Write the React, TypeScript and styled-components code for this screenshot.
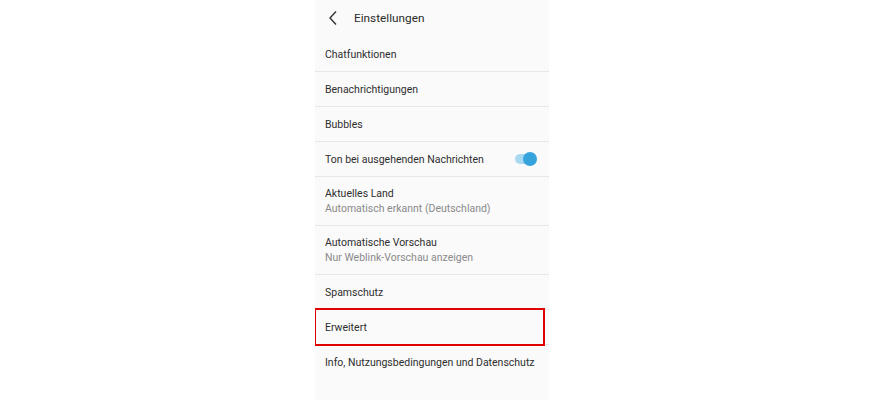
import styled, { createGlobalStyle } from "styled-components";

const GlobalStyle = createGlobalStyle`
  body {
    margin: 0;
    background: #ffffff;
    font-family: Roboto, "Noto Sans", sans-serif;
  }
`;

const Page = styled.div`
  display: flex;
  padding-left: 315px;
  height: 400px;
`;

const Panel = styled.div`
  width: 234px;
  height: 400px;
  background: #fafafa;
  display: flex;
  flex-direction: column;
  overflow: hidden;
`;

const Header = styled.div`
  display: flex;
  align-items: center;
  height: 36px;
  padding: 0 0 1px 13px;
  color: #2b2b2b;
`;

const BackButton = styled.svg`
  width: 10px;
  height: 16px;
  margin-right: 16px;
`;

const Title = styled.div`
  font-size: 11.8px;
`;

const Row = styled.div<{ $double?: boolean; $highlight?: boolean }>`
  position: relative;
  display: flex;
  align-items: center;
  justify-content: space-between;
  height: ${(p) => (p.$double ? 48 : 34)}px;
  padding: 0 12px 0 10px;
  border-bottom: 1px solid #e7e7e7;
  flex-shrink: 0;

  &:last-child {
    border-bottom: none;
  }

  ${(p) =>
    p.$highlight &&
    `
    &::after {
      content: "";
      position: absolute;
      top: -2px;
      left: -1px;
      right: 4px;
      bottom: -2px;
      border: 2.5px solid #e10000;
    }
  `}
`;

const Texts = styled.div`
  display: flex;
  flex-direction: column;
  gap: 2px;
  white-space: nowrap;
`;

const Label = styled.div`
  font-size: 10.5px;
  color: #2e2e2e;
`;

const Sub = styled.div`
  font-size: 10.5px;
  color: #8a8a8a;
`;

const Toggle = styled.div`
  position: relative;
  width: 22px;
  height: 14px;
  display: flex;
  align-items: center;
`;

const Track = styled.div`
  width: 20px;
  height: 10px;
  border-radius: 5px;
  background: #a9d9f1;
`;

const Knob = styled.div`
  position: absolute;
  right: 0;
  top: 0;
  width: 14px;
  height: 14px;
  border-radius: 50%;
  background: #36a3dd;
`;

const items: { label: string; sub?: string; toggle?: boolean; highlight?: boolean }[] = [
  { label: "Chatfunktionen" },
  { label: "Benachrichtigungen" },
  { label: "Bubbles" },
  { label: "Ton bei ausgehenden Nachrichten", toggle: true },
  { label: "Aktuelles Land", sub: "Automatisch erkannt (Deutschland)" },
  { label: "Automatische Vorschau", sub: "Nur Weblink-Vorschau anzeigen" },
  { label: "Spamschutz" },
  { label: "Erweitert", highlight: true },
  { label: "Info, Nutzungsbedingungen und Datenschutz" },
];

const App = () => {
  return (
    <>
      <GlobalStyle />
      <Page>
        <Panel>
          <Header>
            <BackButton viewBox="0 0 10 16">
              <path d="M8 1.5 L2 8 L8 14.5" fill="none" stroke="#333" strokeWidth="1.4" />
            </BackButton>
            <Title>Einstellungen</Title>
          </Header>
          {items.map((item) => (
            <Row key={item.label} $double={!!item.sub} $highlight={item.highlight}>
              <Texts>
                <Label>{item.label}</Label>
                {item.sub && <Sub>{item.sub}</Sub>}
              </Texts>
              {item.toggle && (
                <Toggle>
                  <Track />
                  <Knob />
                </Toggle>
              )}
            </Row>
          ))}
        </Panel>
      </Page>
    </>
  );
};

export default App;
